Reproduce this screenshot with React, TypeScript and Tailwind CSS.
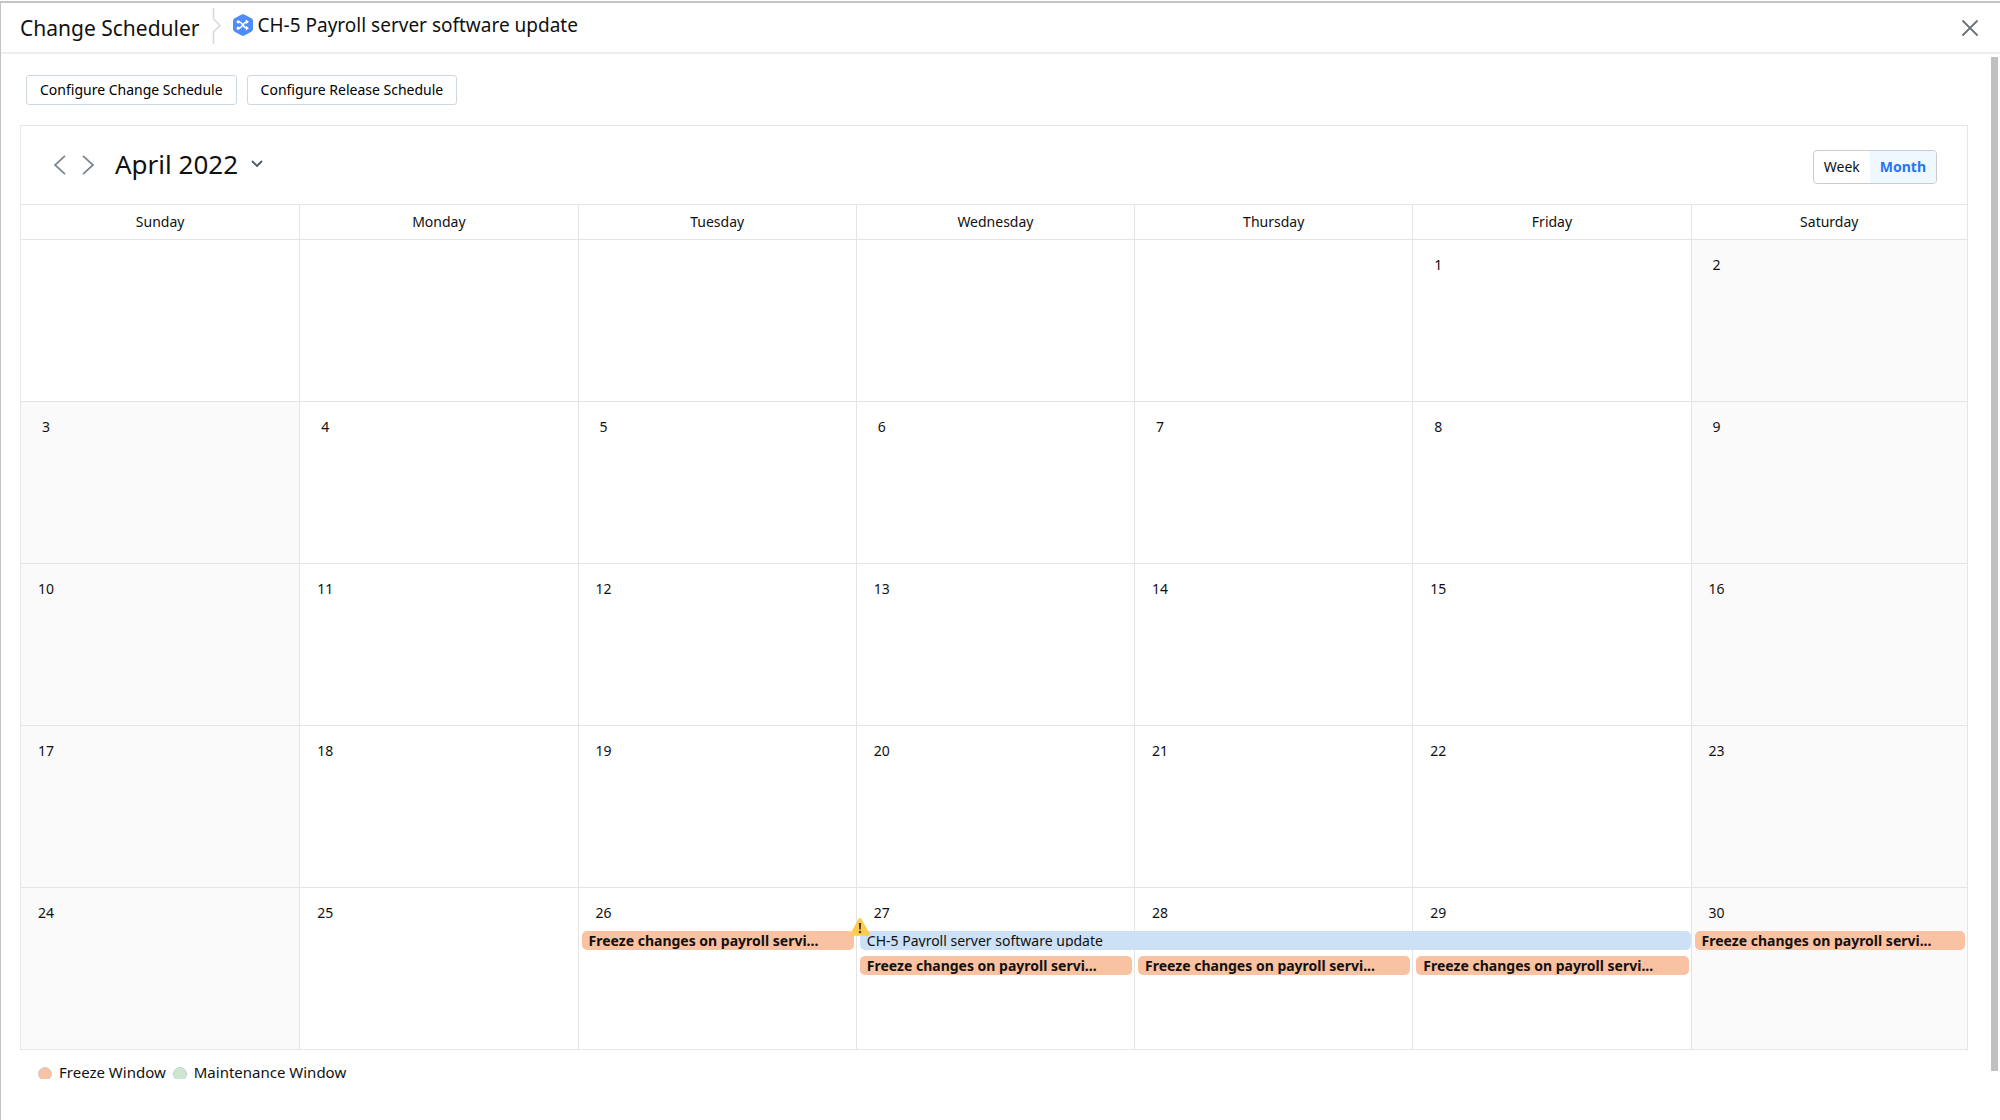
import { useState } from "react";

const DAY_NAMES = ["Sunday", "Monday", "Tuesday", "Wednesday", "Thursday", "Friday", "Saturday"];

// April 2022 starts on a Friday
const WEEKS: (number | null)[][] = [
  [null, null, null, null, null, 1, 2],
  [3, 4, 5, 6, 7, 8, 9],
  [10, 11, 12, 13, 14, 15, 16],
  [17, 18, 19, 20, 21, 22, 23],
  [24, 25, 26, 27, 28, 29, 30],
];

type Slot = "freeze" | "change" | "spanned";

const EVENTS: Record<number, Slot[]> = {
  26: ["freeze"],
  27: ["change", "freeze"],
  28: ["spanned", "freeze"],
  29: ["spanned", "freeze"],
  30: ["freeze"],
};

function HexIcon() {
  return (
    <svg className="h-[22px] w-5 shrink-0" viewBox="0 0 20 22" aria-hidden="true">
      <path d="M8.6 .6a3 3 0 0 1 2.8 0l6.9 3.7A3 3 0 0 1 20 7v8a3 3 0 0 1-1.7 2.7l-6.9 3.7a3 3 0 0 1-2.8 0l-6.9-3.7A3 3 0 0 1 0 15V7a3 3 0 0 1 1.700-2.700z" fill="#4f8bfb" />
      <g fill="none" stroke="#fff" strokeWidth="1.600">
        <path d="M4.500 7.800h1.400c3.800 0 4.200 6.400 8 6.400h1" />
        <path d="M4.500 14.200h1.400c3.800 0 4.200-6.400 8-6.400h1" />
      </g>
      <path d="M12.800 5.400 16 7.800l-3.200 2.400zM12.800 11.800l3.200 2.400-3.200 2.400z" fill="#fff" />
      <circle cx="5.200" cy="7.800" r="1.600" fill="#fff" />
      <circle cx="5.200" cy="14.200" r="1.600" fill="#fff" />
    </svg>
  );
}

function WarningIcon() {
  return (
    <svg className="pointer-events-none absolute -top-[13px] -left-[10px] h-[18px] w-5" viewBox="0 0 20 18" role="img" aria-label="Conflict">
      <path d="M8.500 .9a1.700 1.700 0 0 1 3 0l8 14.400a1.700 1.700 0 0 1-1.500 2.500H2a1.700 1.700 0 0 1-1.500-2.500z" fill="#fdcb50" />
      <path d="M8.800 5h2.400l-.4 6.500H9.200z" fill="#4a3d1c" />
      <circle cx="10" cy="14" r="1.300" fill="#4a3d1c" />
    </svg>
  );
}

function FreezeEvent() {
  return (
    <button className="block h-[19px] w-full truncate rounded-[5px] bg-[#f9c2a2] pl-[7px] text-left text-sm leading-[19px] font-bold">
      Freeze changes on payroll servi...
    </button>
  );
}

function ChangeEvent() {
  return (
    <button className="relative z-10 block h-[19px] w-[calc(300%+14px)] rounded-[5px] bg-[#cce1f6] pl-[7px] text-left text-sm">
      <WarningIcon />
      <span className="mb-[3px] block h-4 overflow-hidden leading-[19px]">CH-5 Payroll server software update</span>
    </button>
  );
}

function Day({ day, weekday }: { day: number | null; weekday: number }) {
  const weekend = day !== null && (weekday === 0 || weekday === 6);
  return (
    <td
      className={`h-[162px] border-t border-l border-[#e6e3e5] p-0 align-top first:border-l-0 ${weekend ? "bg-[#fafafa]" : ""}`}
    >
      {day !== null && <div className="w-[50px] pt-[15px] text-center text-sm leading-5">{day}</div>}
      {day !== null && EVENTS[day] && (
        <div className="mt-2 flex flex-col gap-[6px] pr-[2px] pl-[3px]">
          {EVENTS[day].map((slot, i) =>
            slot === "freeze" ? <FreezeEvent key={i} /> : slot === "change" ? <ChangeEvent key={i} /> : <div key={i} className="h-[19px]" />
          )}
        </div>
      )}
    </td>
  );
}

function Legend({ label, color }: { label: string; color: string }) {
  return (
    <li className="flex items-center gap-[7px]">
      <span className="mt-[2px] h-3 w-[14px] overflow-hidden">
        <span className={`block size-[14px] rounded-full border border-[#c9ced1] ${color}`} />
      </span>
      {label}
    </li>
  );
}

export default function App() {
  const [view, setView] = useState("Month");
  return (
    <div className="flex min-h-screen flex-col bg-white pt-px font-['Noto_Sans',sans-serif] text-[#111]">
      <div className="flex flex-1 flex-col border-t-2 border-l border-t-[#c4c4c4] border-l-[#c4c4c4]">
        <header className="flex h-[51px] items-start border-b-2 border-[#eeeeee] pr-[22px] pl-[19px]">
          <h1 className="pt-[11px] text-[21px] leading-7">Change Scheduler</h1>
          <svg className="mt-[5px] ml-3 h-9 w-[10px]" viewBox="0 0 10 36" fill="none" stroke="#d9d9d9" strokeWidth="1.600" aria-hidden="true">
            <path d="M1.500 0v11l6.500 6.500-6.500 6.500v12" />
          </svg>
          <div className="ml-[11px] flex items-center gap-[5px] pt-[9px]">
            <HexIcon />
            <h2 className="text-[19px] leading-[26px]">CH-5 Payroll server software update</h2>
          </div>
          <button aria-label="Close" className="mt-[17px] ml-auto">
            <svg className="size-4" viewBox="0 0 16 16" fill="none" stroke="#68737d" strokeWidth="1.800" strokeLinecap="round">
              <path d="m1 1 14 14M15 1 1 15" />
            </svg>
          </button>
        </header>

        <div className="flex flex-1 pt-[3px] pr-[2px]">
          <main className="min-w-0 flex-1 pt-[18px] pr-[23px] pl-[19px]">
            <div className="flex gap-[10px] pl-[6px]">
              {["Configure Change Schedule", "Configure Release Schedule"].map((label) => (
                <button key={label} className="h-[30px] rounded-[3px] border border-[#cfd7df] px-[13px] text-sm text-black">
                  {label}
                </button>
              ))}
            </div>

            <section className="mt-5 border border-[#e6e6e6]">
              <div className="flex h-[78px] items-center pr-[30px] pl-[33px]">
                <button aria-label="Previous month">
                  <svg className="h-5 w-3" viewBox="0 0 12 20" fill="none" stroke="#7a868f" strokeWidth="1.800">
                    <path d="m11 .8-10 9.200 10 9.200" />
                  </svg>
                </button>
                <button aria-label="Next month" className="ml-4">
                  <svg className="h-5 w-3" viewBox="0 0 12 20" fill="none" stroke="#7a868f" strokeWidth="1.800">
                    <path d="m1 .8 10 9.200-10 9.200" />
                  </svg>
                </button>
                <button className="ml-[21px] flex items-center gap-[13px] text-[26px] leading-[34px] pb-[2px]">
                  April 2022
                  <svg className="h-2 w-3" viewBox="0 0 12 8" fill="none" stroke="#475867" strokeWidth="1.800" aria-hidden="true">
                    <path d="m1 1 5 5 5-5" />
                  </svg>
                </button>
                <div role="group" aria-label="Calendar view" className="mt-1 ml-auto flex h-[34px] overflow-hidden rounded-[4px] border border-[#cccccc] text-sm">
                  {["Week", "Month"].map((name) => (
                    <button
                      key={name}
                      aria-pressed={view === name}
                      onClick={() => setView(name)}
                      className={`px-[10px] ${view === name ? "bg-[#f0f8ff] font-bold text-[#2575f2]" : ""}`}
                    >
                      {name}
                    </button>
                  ))}
                </div>
              </div>

              <table className="w-full table-fixed border-separate border-spacing-0">
                <colgroup>
                  {DAY_NAMES.map((name, i) => (
                    <col key={name} className={i < 6 ? "w-[14.3%]" : ""} />
                  ))}
                </colgroup>
                <thead>
                  <tr>
                    {DAY_NAMES.map((name) => (
                      <th key={name} scope="col" className="h-[35px] border-t border-l border-[#e6e3e5] p-0 text-sm font-normal first:border-l-0">
                        {name}
                      </th>
                    ))}
                  </tr>
                </thead>
                <tbody>
                  {WEEKS.map((week, w) => (
                    <tr key={w}>
                      {week.map((day, d) => (
                        <Day key={d} day={day} weekday={d} />
                      ))}
                    </tr>
                  ))}
                </tbody>
              </table>
            </section>

            <ul className="mt-3 flex gap-[7px] pl-[18px] text-[15px] leading-5">
              <Legend label="Freeze Window" color="bg-[#f9c2a2]" />
              <Legend label="Maintenance Window" color="bg-[#cce8d0]" />
            </ul>
          </main>
          <div className="mb-[49px] w-[7px] bg-[#c1c0c1]" />
        </div>
      </div>
    </div>
  );
}
